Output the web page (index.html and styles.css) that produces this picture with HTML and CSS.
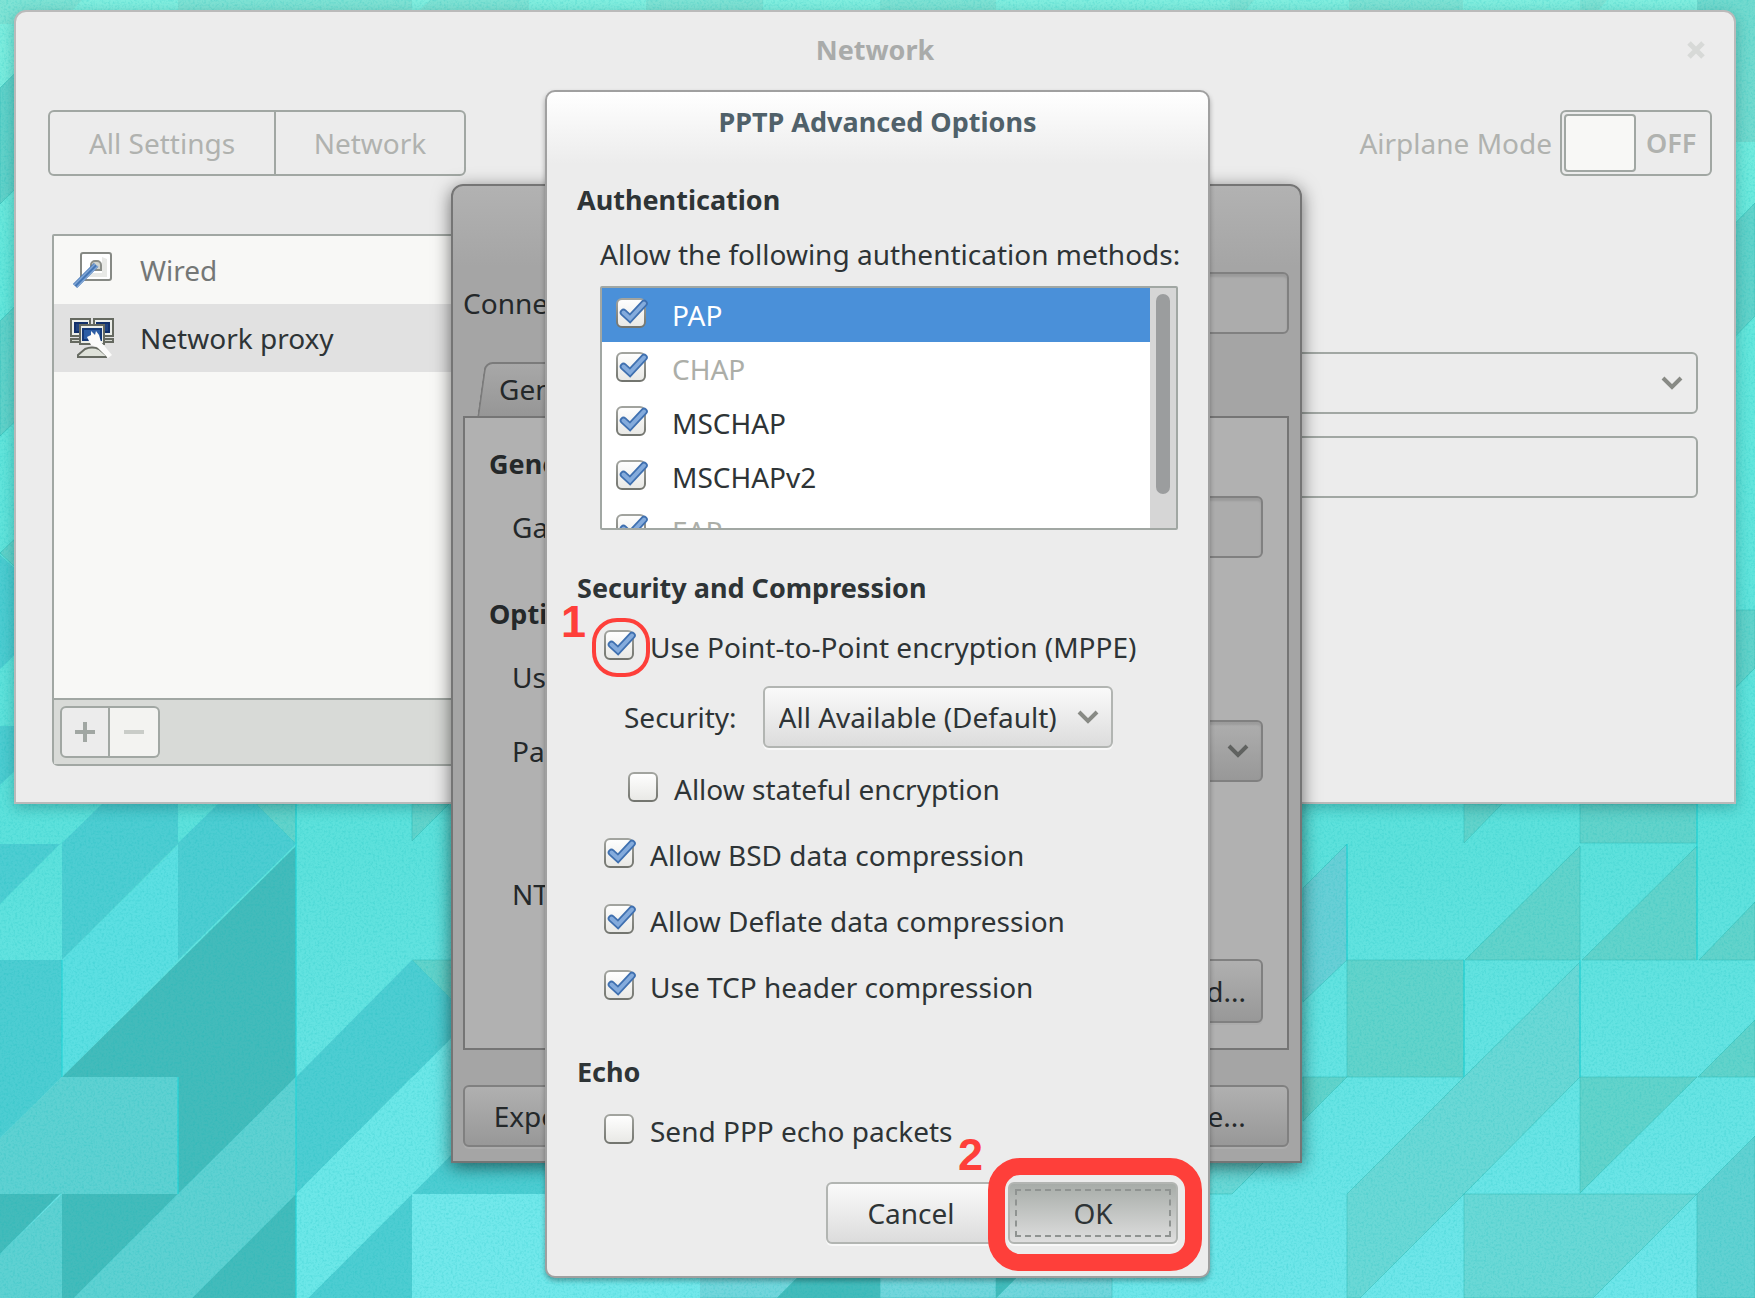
FILE: index.html
```html
<!DOCTYPE html>
<html lang="en">
<head>
<meta charset="utf-8">
<meta name="viewport" content="width=device-width, initial-scale=1">
<title>PPTP Advanced Options</title>
<link rel="stylesheet" href="styles.css">
</head>
<body>
<div class="desktop">
  <svg class="wallpaper" viewBox="0 0 1755 1298" preserveAspectRatio="xMidYMid slice" aria-hidden="true">
    <defs>
      <linearGradient id="sky" x1="0" y1="0" x2="0" y2="1">
        <stop offset="0" stop-color="#82efe0"/>
        <stop offset=".2" stop-color="#66e8dd"/>
        <stop offset=".65" stop-color="#5de1dc"/>
        <stop offset="1" stop-color="#6fe6ea"/>
      </linearGradient>
      <filter id="grain" x="0" y="0" width="100%" height="100%">
        <feTurbulence type="fractalNoise" baseFrequency=".45" numOctaves="2" seed="4"/>
        <feColorMatrix values="0 0 0 0 0  0 0 0 0 .45  0 0 0 0 .45  1.6 0 0 0 -.7"/>
      </filter>
    </defs>
    <rect width="1755" height="1298" fill="url(#sky)"/>
    <g fill="#7fe3d5">
      <path d="M0 0H82L60 24H0zM178 0H412V12H178zM430 0H529V12H418zM646 0H763V12H646zM880 0H996V12H880zM1230 0H1254L1244 12H1230zM1349 0H1463V12H1349zM1580 0H1607L1597 12H1580z"/>
      <path d="M1697 0H1755V142H1697z" fill="#72dacf"/>
    </g>
    <g fill="#62d3cb" stroke="#2fb9b3" stroke-opacity=".5">
      <path d="M0 88 62 27V143L0 204zM0 321 62 260V376L0 436zM0 553 62 494V610z"/>
      <path d="M1697 262 1755 203V316L1697 376zM1697 610H1755V668L1697 727z"/>
      <path d="M412 804H449L412 841zM256 804H296V844zM412 960H460V1008z"/>
      <path d="M1464 804H1502L1464 843zM1580 804H1697V843H1580zM1580 846V960H1465zM1697 846V960H1582zM1755 902V960H1699z"/>
      <path d="M1347 960H1464V1077H1347zM1755 1020V1077H1698zM1580 1077H1697L1580 1193zM1303 1077H1347L1303 1121z"/>
    </g>
    <g fill="#6ad8d6" stroke="#2fb9b3" stroke-opacity=".5">
      <path d="M1580 962V1077L1464 1194 1360 1298H1347V1194L1464 1077z"/>
      <path d="M1209 1194H1232L1270 1156H1209zM1464 1194H1697L1593 1298H1464z"/>
      <path d="M1697 1194 1755 1136V1298H1697z" fill="#61d1d2"/>
      <path d="M1347 844 1303 888V1002L1347 960z" fill="#68cfd6"/>
      <path d="M700 1260 662 1298H777L815 1260zM880 1260H996V1298H880zM996 1298 1034 1260H1112V1298z" fill="#72d6dc"/>
    </g>
    <g fill="#4dcdd2">
      <path d="M0 555 62 610 0 669zM0 726H62L0 785z"/>
      <path d="M0 844H60L0 904zM0 960H62V1077L0 1138z"/>
      <path d="M102 804H178V844L62 960V843zM218 804H256L296 844 178 960V843z"/>
      <path d="M412 960 529 1077 412 1077 296 1194V1077z"/>
      <path d="M529 1077 412 1194H646V1077zM412 1194V1298H308z"/>
    </g>
    <path d="M178 846V960L62 1077V960z" fill="#5cdfe2"/>
    <path d="M529 960V1077L412 1194 308 1298H296V1194z" fill="#6ce7e8"/>
    <path d="M412 1194H700V1298H412z" fill="#72e8eb"/>
    <g fill="#5ed1d2">
      <path d="M62 1077H178V1194H0V1138zM62 1194V1298H0V1254z"/>
      <path d="M296 1077V1194L192 1298H74L178 1194z"/>
    </g>
    <g fill="#43bbbb">
      <path d="M296 846V1077L178 1194V1077H62z"/>
      <path d="M0 1194H60L0 1254zM62 1194H178L74 1298H62zM296 1194V1298H192z"/>
      <path d="M815 1260H880V1298H777zM996 1260H1034L996 1298z"/>
    </g>
    <path d="M296 804V1298M178 1077V1194M62 960V1077M1347 844V960M1464 960V1077M1580 960V1077M1697 804V960" stroke="#27d5d8" stroke-width="2" stroke-opacity=".6"/>
    <rect width="1755" height="1298" filter="url(#grain)" opacity=".3"/>
  </svg>

  <main class="window window-network">
    <header class="titlebar">
      <h1>Network</h1>
      <button class="close" aria-label="Close" disabled>
        <svg viewBox="0 0 18 18"><path d="M2 2 16 16M16 2 2 16" stroke="#d7d9d7" stroke-width="5"/></svg>
      </button>
    </header>
    <div class="toolbar">
      <nav class="segmented">
        <button disabled>All Settings</button>
        <button disabled>Network</button>
      </nav>
      <label class="airplane">Airplane Mode
        <span class="switch"><input type="checkbox" disabled><b>OFF</b></span>
      </label>
    </div>
    <div class="content">
      <section class="devices">
        <ul>
          <li class="muted">
            <svg viewBox="0 0 44 44">
              <rect x="11" y="5" width="30" height="27" rx="2" fill="#fff" stroke="#868984" stroke-width="2"/>
              <path d="M17 29h20V11l-5-2v16H17z" fill="#e8e9e6"/>
              <path d="M21 22v-5a4 4 0 0 1 4-4h2a4 4 0 0 1 4 4v5z" fill="#d2d5ce" stroke="#8b8e88" stroke-width="2"/>
              <path d="M26 17 5 38" stroke="#4577b6" stroke-width="6"/>
              <path d="M25 16 4 37M28 18 7 39" stroke="#84a8d6" stroke-width="1.5"/>
            </svg>
            Wired
          </li>
          <li class="selected">
            <svg viewBox="0 0 44 44">
              <g stroke="#666a61" stroke-width="2">
                <path d="M1 3h19v17H1zM24 3h19v17H24z" fill="#eceee9"/>
                <path d="M5 7h12v9H5zM27 7h12v9H27z" fill="#20427f" stroke="#12306a"/>
                <path d="M1 23h11v3H1zM32 23h11v3H32z" fill="#d7dad3"/>
                <path d="M10 9h24v19H10z" fill="#eceee9"/>
                <path d="M13 13h18v11H13z" fill="#2c5da5" stroke="#163a78"/>
                <path d="M15 33q7-3 14 0l7 6v2H8v-2z" fill="#dfe2da"/>
              </g>
              <path d="M17 21l4-2 0-4 4 4 1-4 3 4 2 7 11 13-4 3-11-11-6-2z" fill="#fbfbfa"/>
            </svg>
            Network proxy
          </li>
        </ul>
        <div class="devices-bar">
          <button disabled aria-label="Add"><svg viewBox="0 0 20 20"><path d="M10 0v20M0 10h20" stroke="#a1a7a3" stroke-width="4"/></svg></button>
          <button disabled aria-label="Remove"><svg viewBox="0 0 20 20"><path d="M0 10h20" stroke="#c9ccc8" stroke-width="4"/></svg></button>
        </div>
      </section>
      <form class="proxy-form">
        <select aria-label="Method" disabled></select>
        <input type="text" aria-label="Configuration URL" disabled>
      </form>
    </div>
  </main>

  <section class="window window-editor">
    <div class="name-row">
      <label for="cname">Connection name:</label>
      <input id="cname" type="text">
    </div>
    <button class="tab">General</button>
    <div class="page">
      <h2>General</h2>
      <div class="field"><label for="gw">Gateway:</label><input id="gw" type="text"></div>
      <h2 class="spaced">Optional</h2>
      <div class="field short"><label for="user">User name:</label><input id="user" type="text"></div>
      <div class="field"><label for="pass">Password:</label><select id="pass"></select></div>
      <div class="field domain"><label for="nt">NT Domain:</label><input id="nt" type="text"></div>
      <button class="button advanced">Advanced...</button>
    </div>
    <footer>
      <button class="button">Export...</button>
      <button class="button">Save...</button>
    </footer>
  </section>

  <section class="window window-dialog" role="dialog" aria-labelledby="dtitle">
    <header><h2 id="dtitle">PPTP Advanced Options</h2></header>
    <form class="dialog-body">
      <h3>Authentication</h3>
      <p class="hint">Allow the following authentication methods:</p>
      <div class="methods">
        <div class="rows">
          <label class="active"><input class="check" type="checkbox" checked>PAP</label>
          <label class="dim"><input class="check" type="checkbox" checked>CHAP</label>
          <label><input class="check" type="checkbox" checked>MSCHAP</label>
          <label><input class="check" type="checkbox" checked>MSCHAPv2</label>
          <label class="dim"><input class="check" type="checkbox" checked>EAP</label>
        </div>
        <div class="trough"><div class="thumb"></div></div>
      </div>

      <h3 class="security-title">Security and Compression</h3>
      <div class="options">
        <label class="option mppe"><input class="check" type="checkbox" checked>Use Point-to-Point encryption (MPPE)
          <span class="ring"></span><span class="step step-one">1</span>
        </label>
        <div class="security">
          <label for="sec">Security:</label>
          <select id="sec"><option>All Available (Default)</option></select>
        </div>
        <label class="option nested"><input class="check" type="checkbox">Allow stateful encryption</label>
        <label class="option"><input class="check" type="checkbox" checked>Allow BSD data compression</label>
        <label class="option"><input class="check" type="checkbox" checked>Allow Deflate data compression</label>
        <label class="option"><input class="check" type="checkbox" checked>Use TCP header compression</label>
      </div>

      <h3 class="echo-title">Echo</h3>
      <div class="options">
        <label class="option echo"><input class="check" type="checkbox">Send PPP echo packets</label>
      </div>

      <div class="actions">
        <button class="button" type="button">Cancel</button>
        <div class="ok-wrap">
          <button class="button ok" type="button">OK</button>
          <span class="frame"></span><span class="step step-two">2</span>
        </div>
      </div>
    </form>
  </section>
</div>
</body>
</html>
```
FILE: styles.css
```css
* { box-sizing: border-box; }

body {
  margin: 0;
  font: 28px/40px "Noto Sans", sans-serif;
  color: #2e3436;
}

button, input, select { font: inherit; color: inherit; margin: 0; }
h1, h2, h3, p, ul { margin: 0; padding: 0; }
h1, h2, h3 { font-size: 27px; font-weight: 700; line-height: 40px; }

.desktop {
  position: relative;
  display: grid;
  min-height: 100vh;
  overflow: hidden;
}

.wallpaper { position: absolute; inset: 0; width: 100%; height: 100%; }

.window { position: relative; grid-area: 1 / 1; align-self: start; border: 2px solid; }

/* Network settings window */
.window-network {
  margin: 10px 19px 0 14px;
  background: #ececec;
  border-color: #bababa;
  border-radius: 12px 12px 0 0;
  color: #b0b2af;
  box-shadow: 0 4px 14px rgba(0, 60, 60, .3);
}

.titlebar {
  display: grid;
  grid-template-columns: 1fr auto 1fr;
  align-items: center;
  height: 76px;
  padding: 0 29px;
}
.titlebar h1 { grid-column: 2; color: #a9abaa; }

.close {
  justify-self: end;
  display: flex;
  width: 18px;
  height: 18px;
  padding: 0;
  border: 0;
  background: none;
}

.toolbar {
  display: flex;
  justify-content: space-between;
  margin-top: 22px;
  padding: 0 22px 0 32px;
}

.segmented { display: flex; height: 66px; border: 2px solid #a1a7a3; border-radius: 6px; }
.segmented button { width: 224px; padding: 0; border: 0; background: none; }
.segmented button + button { width: 190px; border-left: 2px solid #a1a7a3; }

.airplane { display: flex; align-items: center; gap: 8px; }
.switch {
  display: flex;
  align-items: center;
  gap: 10px;
  width: 152px;
  height: 66px;
  padding: 2px;
  border: 2px solid #a1a7a3;
  border-radius: 6px;
}
.switch input {
  appearance: none;
  width: 72px;
  height: 58px;
  background: #f8f8f6;
  border: 2px solid #a1a7a3;
  border-radius: 4px;
}
.switch b { font-size: 27px; font-weight: 600; }

.content { display: flex; margin-top: 58px; padding: 0 36px 36px; }

.devices {
  display: flex;
  flex-direction: column;
  width: 440px;
  height: 532px;
  border: 2px solid #a1a7a3;
  border-radius: 2px 2px 6px 6px;
  background: #f8f8f6;
}
.devices ul { flex: 1; list-style: none; }
.devices li { display: flex; align-items: center; gap: 26px; height: 68px; padding-left: 16px; color: #2e3436; }
.devices li svg { width: 44px; height: 44px; }
.devices li.muted { color: #747776; }
.devices li.selected { background: #e1e1e1; }

.devices-bar {
  display: flex;
  height: 66px;
  padding: 6px;
  border-top: 2px solid #a1a7a3;
  background: #d8dad7;
}
.devices-bar button {
  display: grid;
  place-items: center;
  width: 50px;
  height: 52px;
  padding: 0;
  border: 2px solid #a1a7a3;
  border-radius: 6px 0 0 6px;
  background: #ececec;
}
.devices-bar button + button { border-left: 0; border-radius: 0 6px 6px 0; background: #f3f3f1; }
.devices-bar svg { width: 20px; height: 20px; }

.proxy-form { flex: 1; display: flex; flex-direction: column; gap: 22px; margin-left: 300px; padding-top: 118px; }
.proxy-form select, .proxy-form input {
  width: 100%;
  height: 62px;
  border: 2px solid #a1a7a3;
  border-radius: 6px;
  background: none;
}

select {
  appearance: none;
  opacity: 1;
}
.proxy-form select, .field select, .security select {
  background-image: url("data:image/svg+xml,%3Csvg xmlns='http://www.w3.org/2000/svg' viewBox='0 0 22 14'%3E%3Cpath d='M2 2l9 9 9-9' fill='none' stroke='%23888a85' stroke-width='4'/%3E%3C/svg%3E");
  background-repeat: no-repeat;
  background-position: right 13px center;
  background-size: 22px 14px;
}

/* VPN editor window, inactive behind the dialog */
.window-editor {
  z-index: 0;
  justify-self: center;
  width: 851px;
  margin: 184px 2px 0 0;
  padding: 86px 11px 14px 10px;
  background: linear-gradient(#b2b2b2, #a5a5a5 80px);
  border-color: #757575;
  border-radius: 12px 12px 0 0;
  box-shadow: 0 4px 18px rgba(0, 0, 0, .55);
  color: #24282a;
}

.window-editor input, .field select {
  flex: 1;
  min-width: 0;
  height: 62px;
  border: 2px solid #808080;
  border-radius: 6px;
  background-color: #acacac;
  box-shadow: inset 0 3px 2px rgba(0, 0, 0, .1);
}
.name-row { display: flex; align-items: center; gap: 12px; }

.tab {
  position: relative;
  display: block;
  width: 170px;
  height: 54px;
  margin: 28px 0 0 18px;
  padding: 0 18px;
  border: 0;
  background: none;
  text-align: left;
}
.tab::before {
  content: "";
  position: absolute;
  z-index: -1;
  inset: 0;
  border: 2px solid #7b7b7b;
  border-bottom: 0;
  border-radius: 8px 8px 0 0;
  background: linear-gradient(#a8a8a8, #969696);
  transform: skewX(-8deg);
}

.page {
  display: flex;
  flex-direction: column;
  padding: 26px 24px 25px 24px;
  border: 2px solid #757575;
  background: #b1b1b1;
}
.field { display: flex; align-items: center; margin: 12px 0 0 23px; }
.field label { width: 170px; }
.field.short { margin-right: 90px; }
.field.domain { margin-top: 81px; margin-right: 90px; }
.field select {
  background-color: #a1a1a1;
  background-image: url("data:image/svg+xml,%3Csvg xmlns='http://www.w3.org/2000/svg' viewBox='0 0 22 14'%3E%3Cpath d='M2 2l9 9 9-9' fill='none' stroke='%23606260' stroke-width='4'/%3E%3C/svg%3E"), linear-gradient(#aeaeae, #989898);
  background-size: 22px 14px, 100% 100%;
  background-position: right 12px center, 0 0;
}
.page .spaced { margin-top: 36px; }
.page .advanced { align-self: flex-end; height: 64px; margin-top: 34px; padding: 0 15px; }

.window-editor footer { display: flex; justify-content: space-between; margin-top: 35px; }

.button {
  min-width: 170px;
  height: 62px;
  padding: 0;
  border: 2px solid #b2b5b2;
  border-radius: 6px;
  background: linear-gradient(#fafafa, #dcdcdc);
  box-shadow: 0 2px 0 #f8f8f8;
}
.window-editor .button {
  border-color: #808080;
  background: linear-gradient(#b0b0b0, #989898);
  box-shadow: 0 2px 0 #acacac;
}

/* Options dialog */
.window-dialog {
  z-index: 1;
  justify-self: center;
  width: 665px;
  margin: 90px 0 20px;
  background: #ececec;
  background-image: linear-gradient(#fff, #ececec 72px);
  border-color: #a0a0a0;
  border-radius: 10px;
  box-shadow: 0 3px 5px rgba(0, 0, 0, .3);
}
.window-dialog header { display: grid; place-items: center; height: 60px; }
.window-dialog header h2 { color: #50616a; }

.dialog-body { display: flex; flex-direction: column; padding: 28px 30px 32px; }

.hint { margin: 14px 0 0 23px; white-space: nowrap; }

.methods {
  display: flex;
  height: 244px;
  margin: 12px 0 0 23px;
  border: 2px solid #a1a7a3;
  border-radius: 2px;
  overflow: hidden;
  background: #fff;
}
.rows { flex: 1; }
.rows label { display: flex; gap: 22px; height: 54px; padding: 7px 14px; }
.rows .active { background: #4a90d9; color: #fff; }
.rows .dim { color: #acaea8; }
.trough { width: 26px; padding: 6px; background: #d6d6d6; }
.thumb { width: 14px; height: 200px; border-radius: 7px; background: #9b9d9e; }

.check {
  appearance: none;
  flex: none;
  width: 34px;
  height: 32px;
  margin-top: 3px;
  background: url("data:image/svg+xml,%3Csvg xmlns='http://www.w3.org/2000/svg' viewBox='0 0 34 32'%3E%3Cdefs%3E%3ClinearGradient id='a' x2='0' y2='1'%3E%3Cstop stop-color='%23fff'/%3E%3Cstop offset='1' stop-color='%23e8e8e5'/%3E%3C/linearGradient%3E%3ClinearGradient id='b' x2='0' y2='1'%3E%3Cstop stop-color='%23a2a49f'/%3E%3Cstop offset='1' stop-color='%2373756f'/%3E%3C/linearGradient%3E%3C/defs%3E%3Crect x='1' y='1' width='28' height='28' rx='5' fill='url(%23a)' stroke='url(%23b)' stroke-width='2'/%3E%3C/svg%3E") no-repeat;
}
.check:checked {
  background-image: url("data:image/svg+xml,%3Csvg xmlns='http://www.w3.org/2000/svg' viewBox='0 0 34 32'%3E%3Cdefs%3E%3ClinearGradient id='a' x2='0' y2='1'%3E%3Cstop stop-color='%23fff'/%3E%3Cstop offset='1' stop-color='%23e8e8e5'/%3E%3C/linearGradient%3E%3ClinearGradient id='b' x2='0' y2='1'%3E%3Cstop stop-color='%23a2a49f'/%3E%3Cstop offset='1' stop-color='%2373756f'/%3E%3C/linearGradient%3E%3C/defs%3E%3Crect x='1' y='1' width='28' height='28' rx='5' fill='url(%23a)' stroke='url(%23b)' stroke-width='2'/%3E%3Cg fill='none' stroke-linejoin='miter' stroke-linecap='round'%3E%3Cpath d='M7.500 14.500L14 20.500L28 5.500' stroke='%233f70b0' stroke-width='7.500'/%3E%3Cpath d='M7.500 14.500L14 20.500L28 5.500' stroke='%2384abdc' stroke-width='4'/%3E%3C/g%3E%3C/svg%3E");
}

.security-title { margin-top: 38px; }
.echo-title { margin-top: 45px; }

.options { display: flex; flex-direction: column; align-items: flex-start; margin-left: 27px; }
.option { position: relative; display: flex; gap: 12px; margin-top: 26px; }
.option.mppe, .option.echo { margin-top: 19px; }
.option.nested { margin: 21px 0 0 24px; }

.security { display: flex; align-items: center; gap: 26px; margin: 19px 0 0 20px; }
.security select {
  width: 350px;
  height: 62px;
  padding: 0 14px;
  border: 2px solid #b2b5b2;
  border-radius: 6px;
  background-color: #ececec;
  background-image: url("data:image/svg+xml,%3Csvg xmlns='http://www.w3.org/2000/svg' viewBox='0 0 22 14'%3E%3Cpath d='M2 2l9 9 9-9' fill='none' stroke='%23888a85' stroke-width='4'/%3E%3C/svg%3E"), linear-gradient(#fafafa, #dcdcdc);
  background-position: right 12px center, 0 0;
  background-size: 22px 14px, 100% 100%;
  box-shadow: 0 2px 0 #f8f8f8;
}

.actions { display: flex; justify-content: flex-end; gap: 12px; margin-top: 31px; }
.ok-wrap { position: relative; display: flex; }
.button.ok {
  background: linear-gradient(#a7aca8, #dedede);
  outline: 2px dashed #8f9391;
  outline-offset: -9px;
}

/* Tutorial marks drawn over the dialog */
.ring {
  position: absolute;
  left: -12px;
  top: -9px;
  width: 58px;
  height: 59px;
  border: 4px solid #fe3f3a;
  border-radius: 25px;
}
.frame {
  position: absolute;
  left: -20px;
  top: -24px;
  width: 214px;
  height: 113px;
  border: 17px solid #fe3f3a;
  border-radius: 32px;
}
.step {
  position: absolute;
  font: bold 45px/40px "Liberation Sans", Arial, sans-serif;
  color: #fe3f3a;
}
.step-one { left: -43px; top: -25px; }
.step-two { left: -50px; top: -47px; }
```
